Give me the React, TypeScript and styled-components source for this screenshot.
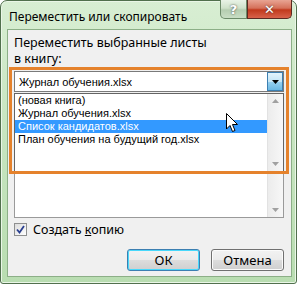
import React from 'react';
import styled, { createGlobalStyle } from 'styled-components';

const GlobalStyle = createGlobalStyle`
  html, body {
    margin: 0;
    padding: 0;
    background: #ffffff;
  }
  body {
    font-family: 'Noto Sans', 'Open Sans', sans-serif;
    font-size: 12.5px;
    color: #000;
  }
`;

// Outer Aero glass frame
const Window = styled.div`
  width: 297px;
  height: 284px;
  box-sizing: border-box;
  border: 1px solid #51704d;
  border-radius: 7px 7px 3px 3px;
  background: linear-gradient(180deg, #d8eed3 0%, #c9e6c2 40%, #b9ddb1 100%);
  box-shadow: inset 0 0 0 1px #eaf6e7;
  display: flex;
  flex-direction: column;
  padding: 0 4px 6px 6px;
`;

const TitleBar = styled.div`
  height: 28px;
  display: flex;
  align-items: flex-start;
  justify-content: space-between;
`;

const Title = styled.div`
  padding: 7px 0 0 2px;
  font-size: 12px;
  color: #000;
`;

const CaptionButtons = styled.div`
  display: flex;
  margin-top: -1px;
`;

const CaptionButton = styled.div<{ $close?: boolean }>`
  width: ${p => (p.$close ? '45px' : '27px')};
  height: 19px;
  box-sizing: border-box;
  border: 1px solid ${p => (p.$close ? '#5c2a22' : '#6c8a68')};
  border-top: none;
  border-radius: ${p => (p.$close ? '0 0 5px 0' : '0 0 0 5px')};
  background: ${p =>
    p.$close
      ? 'linear-gradient(180deg, #e8a493 0%, #d5715a 45%, #c1391c 55%, #d8624a 100%)'
      : 'linear-gradient(180deg, #e9f3e6 0%, #cfe2ca 45%, #b5cdb0 55%, #c9dec4 100%)'};
  display: flex;
  align-items: center;
  justify-content: center;
  color: #fff;
  font-family: 'DejaVu Sans', sans-serif;
  font-weight: bold;
  font-size: 13px;
  text-shadow: 0 0 2px #333;
`;

// Client area of the dialog
const Client = styled.div`
  flex: 1;
  background: #f0f0f0;
  border: 1px solid #8caf87;
  display: flex;
  flex-direction: column;
  padding: 5px 7px 0 6px;
`;

const Label = styled.div`
  line-height: 16px;
`;

const PickerArea = styled.div`
  position: relative;
  margin-top: 4px;
  display: flex;
  flex-direction: column;
  gap: 2px;
  font-family: 'Liberation Sans', Arial, sans-serif;
  font-size: 11px;
`;

const Combo = styled.div`
  height: 21px;
  box-sizing: border-box;
  border: 1px solid #7a7a7a;
  background: #fff;
  display: flex;
  align-items: center;
  padding-left: 4px;
`;

const ComboText = styled.div`
  flex: 1;
`;

const DropButton = styled.div`
  width: 16px;
  height: 19px;
  box-sizing: border-box;
  border: 1px solid #3c7fb1;
  background: linear-gradient(180deg, #e3f4fc 0%, #c4e5f6 50%, #98d1ef 51%, #6ab8e4 100%);
  display: flex;
  align-items: center;
  justify-content: center;
`;

const ListBox = styled.div`
  height: 124px;
  box-sizing: border-box;
  border: 1px solid #9a9a9a;
  background: #fff;
  display: flex;
  justify-content: flex-end;
`;

const ScrollBar = styled.div`
  width: 16px;
  background: linear-gradient(90deg, #ececec, #f7f7f7);
  border-left: 1px solid #e2e2e2;
  display: flex;
  flex-direction: column;
  justify-content: space-between;
  align-items: center;
  padding: 5px 0;
  box-sizing: border-box;
`;

// Drop-down popup lying over the list box
const Popup = styled.div`
  position: absolute;
  top: 22px;
  left: 0;
  right: 0;
  height: 79px;
  box-sizing: border-box;
  border: 1px solid #646464;
  background: #fff;
  display: flex;
`;

const Items = styled.div`
  flex: 1;
  display: flex;
  flex-direction: column;
`;

const Item = styled.div<{ $selected?: boolean }>`
  height: 13px;
  line-height: 13px;
  padding-left: 3px;
  white-space: nowrap;
  background: ${p => (p.$selected ? '#3399ff' : 'transparent')};
  color: ${p => (p.$selected ? '#fff' : '#000')};
`;

// Orange annotation frame drawn over the combo
const Highlight = styled.div`
  position: absolute;
  top: -4px;
  left: -5px;
  right: -5px;
  height: 107px;
  box-sizing: border-box;
  border: 3px solid #e5822c;
  pointer-events: none;
`;

const Cursor = styled.svg`
  position: absolute;
  left: 212px;
  top: 42px;
`;

const CheckRow = styled.div`
  display: flex;
  align-items: center;
  gap: 6px;
  margin-top: 5px;
  height: 13px;
`;

const CheckBox = styled.div`
  width: 11px;
  height: 11px;
  border: 1px solid #8e8f8f;
  background: linear-gradient(135deg, #dcdcdc, #ffffff);
  display: flex;
  align-items: center;
  justify-content: center;
`;

const Buttons = styled.div`
  display: flex;
  justify-content: flex-end;
  gap: 11px;
  margin-top: 13px;
`;

const Button = styled.div<{ $default?: boolean }>`
  width: 73px;
  height: 22px;
  box-sizing: border-box;
  border: 1px solid ${p => (p.$default ? '#3c7fb1' : '#707070')};
  border-radius: 3px;
  background: linear-gradient(180deg, #f2f2f2 0%, #ebebeb 50%, #dddddd 51%, #cfcfcf 100%);
  box-shadow: inset 0 0 0 1px ${p => (p.$default ? '#48d8fb' : '#fbfbfb')};
  display: flex;
  align-items: center;
  justify-content: center;
  font-size: 13px;
`;

const Arrow = ({ up, color = '#a0a0a0' }: { up?: boolean; color?: string }) => (
  <svg width="7" height="4" viewBox="0 0 7 4">
    <path d={up ? 'M0 4 L3.5 0 L7 4 Z' : 'M0 0 L7 0 L3.5 4 Z'} fill={color} />
  </svg>
);

export default function App() {
  return (
    <>
      <GlobalStyle />
      <Window>
        <TitleBar>
          <Title>Переместить или скопировать</Title>
          <CaptionButtons>
            <CaptionButton>?</CaptionButton>
            <CaptionButton $close>✕</CaptionButton>
          </CaptionButtons>
        </TitleBar>
        <Client>
          <Label>Переместить выбранные листы</Label>
          <Label>в книгу:</Label>
          <PickerArea>
            <Combo>
              <ComboText>Журнал обучения.xlsx</ComboText>
              <DropButton>
                <Arrow color="#000" />
              </DropButton>
            </Combo>
            <ListBox>
              <ScrollBar>
                <Arrow up />
                <Arrow />
              </ScrollBar>
            </ListBox>
            <Popup>
              <Items>
                <Item>(новая книга)</Item>
                <Item>Журнал обучения.xlsx</Item>
                <Item $selected>Список кандидатов.xlsx</Item>
                <Item>План обучения на будущий год.xlsx</Item>
              </Items>
              <ScrollBar>
                <Arrow up />
                <Arrow />
              </ScrollBar>
            </Popup>
            <Highlight />
            <Cursor width="13" height="20" viewBox="0 0 13 20">
              <path d="M0.5 0.5 L0.5 16 L4 12.5 L6.5 18.5 L9 17.5 L6.5 11.5 L11.5 11.5 Z" fill="#fff" stroke="#000" strokeWidth="1" />
            </Cursor>
          </PickerArea>
          <CheckRow>
            <CheckBox>
              <svg width="9" height="9" viewBox="0 0 9 9">
                <path d="M1 4.5 L3.5 7.5 L8 1" fill="none" stroke="#2a3f8f" strokeWidth="1.8" />
              </svg>
            </CheckBox>
            <span>
              Создать <u>к</u>опию
            </span>
          </CheckRow>
          <Buttons>
            <Button $default>ОК</Button>
            <Button>Отмена</Button>
          </Buttons>
        </Client>
      </Window>
    </>
  );
}
